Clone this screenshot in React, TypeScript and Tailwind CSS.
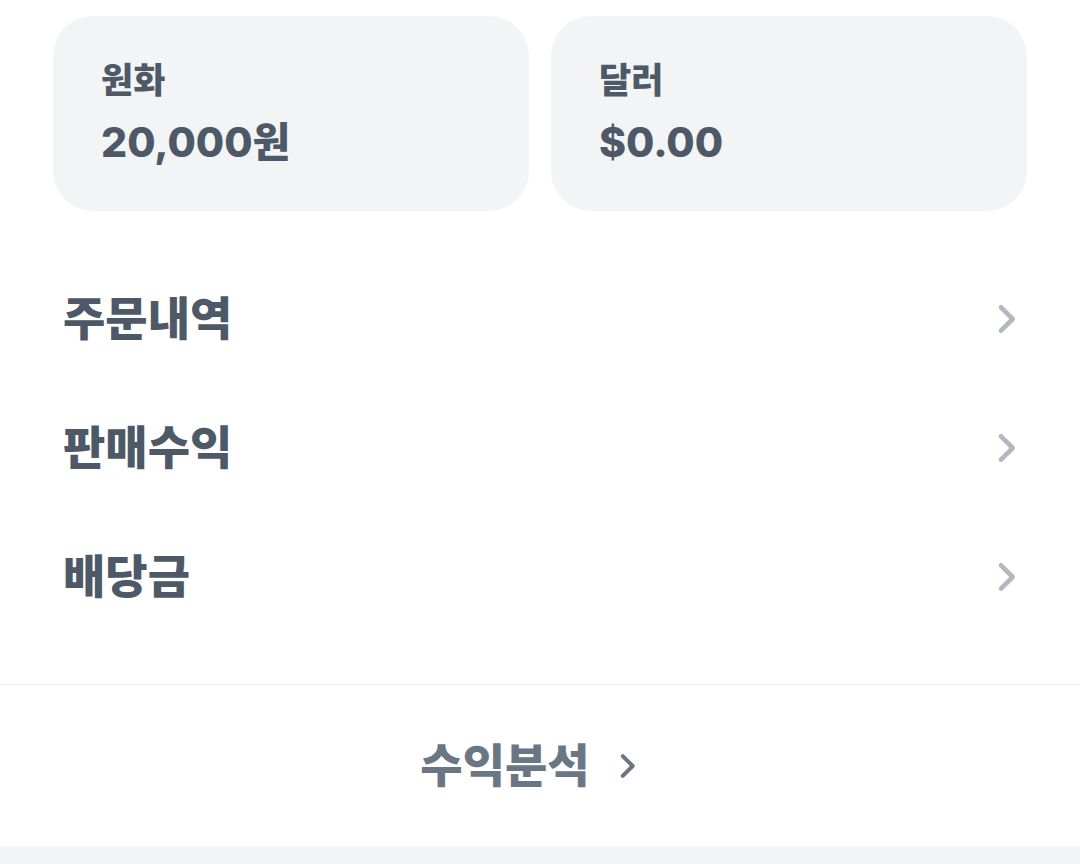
const font = { fontFamily: 'Inter, "Noto Sans CJK KR", sans-serif' }

function Chevron({ className }: { className?: string }) {
  return (
    <svg viewBox="0 0 24 24" fill="none" className={className}>
      <path d="M9 5l7 7-7 7" stroke="currentColor" strokeWidth="2.8" strokeLinecap="round" strokeLinejoin="round" />
    </svg>
  )
}

const menus = ['주문내역', '판매수익', '배당금']

export default function App() {
  return (
    <div className="w-[1080px] min-h-[864px] bg-white" style={font}>
      {/* Balance cards */}
      <div className="grid grid-cols-2 gap-[22px] px-[53px] pt-4">
        <div className="h-[195px] rounded-[40px] bg-[#f2f4f6] pl-12 pt-[44px]">
          <p className="text-[35px] leading-[40px] font-extrabold text-[#4e5968]">원화</p>
          <p className="mt-[17px] text-[41px] leading-[50px] font-extrabold text-[#4e5968]">20,000원</p>
        </div>
        <div className="h-[195px] rounded-[40px] bg-[#f2f4f6] pl-12 pt-[44px]">
          <p className="text-[35px] leading-[40px] font-extrabold text-[#4e5968]">달러</p>
          <p className="mt-[17px] text-[41px] leading-[50px] font-extrabold text-[#4e5968]">$0.00</p>
        </div>
      </div>

      {/* Menu list */}
      <div className="mt-[43px] px-[63px]">
        {menus.map((m) => (
          <div key={m} className="h-[129px] flex items-center justify-between">
            <span className="text-[46px] font-extrabold text-[#4e5968]">{m}</span>
            <Chevron className="w-[40px] h-[40px] text-[#b0b8c1] mr-[-9px]" />
          </div>
        ))}
      </div>

      <div className="mt-[43px] border-t border-[#e5e8eb]" />

      <div className="h-[161px] flex items-center justify-center gap-[20px] pr-[16px]">
        <span className="text-[46px] font-extrabold text-[#6b7684]">수익분석</span>
        <Chevron className="w-[34px] h-[34px] text-[#6b7684]" />
      </div>

      <div className="h-[40px] bg-[#f2f4f6]" />
    </div>
  )
}
